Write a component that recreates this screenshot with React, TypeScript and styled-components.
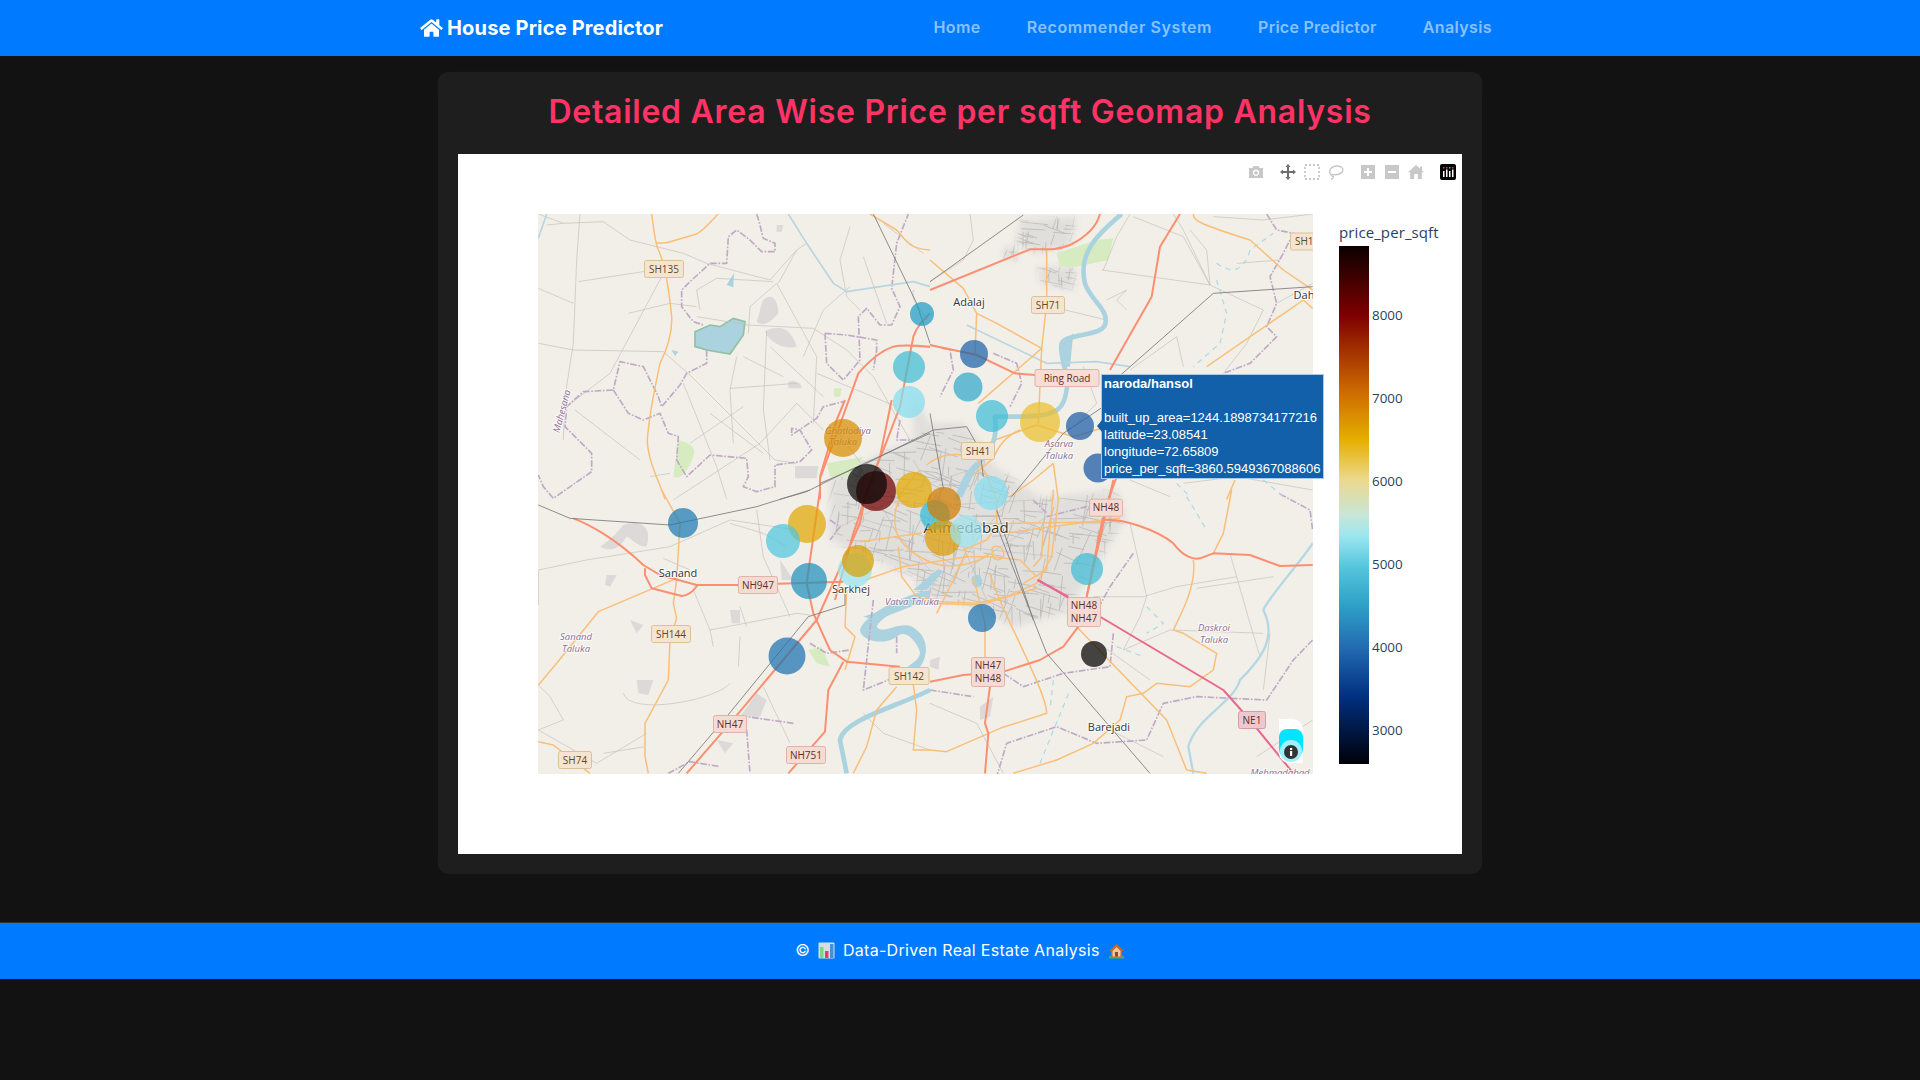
import React from "react";
import styled, { createGlobalStyle } from "styled-components";
import { FaHome } from "react-icons/fa";

const Global = createGlobalStyle`
  html, body { margin: 0; padding: 0; background: #121212; }
  body { min-height: 1080px; font-family: "Inter", "Liberation Sans", sans-serif; }
`;

const Page = styled.div`
  width: 1920px;
  min-height: 1080px;
  overflow: hidden;
  background: #121212;
  color: #fff;
`;
const Nav = styled.nav`
  height: 56px;
  background: #007bff;
  display: flex;
  justify-content: center;
`;
const NavInner = styled.div`
  width: 1080px;
  padding-right: 8px;
  box-sizing: border-box;
  display: flex;
  align-items: center;
  justify-content: space-between;
`;
const Brand = styled.div`
  display: flex;
  align-items: center;
  gap: 4px;
  font-size: 20px;
  font-weight: 700;
  letter-spacing: 0.17px;
  color: #fff;
  svg { width: 23px; height: 20px; }
`;
const NavLinks = styled.div`
  display: flex;
  gap: 46px;
  padding-bottom: 2px;
`;
const NavLink = styled.a<{ $track: number }>`
  font-size: 16px;
  font-weight: 600;
  color: rgba(255, 255, 255, 0.55);
  letter-spacing: ${(p) => p.$track}px;
`;
const Card = styled.main`
  box-sizing: border-box;
  width: 1044px;
  height: 802px;
  margin: 16px auto 48px;
  padding: 0 20px 20px;
  background: #1e1e1e;
  border-radius: 10px;
  box-shadow: 0 0 12px rgba(255, 255, 255, 0.02);
`;
const Title = styled.h1`
  margin: 0;
  height: 82px;
  display: flex;
  align-items: center;
  justify-content: center;
  padding-bottom: 4px;
  box-sizing: border-box;
  font-size: 32px;
  font-weight: 600;
  letter-spacing: 0.73px;
  color: #ff3366;
`;
const Plot = styled.section`
  position: relative;
  box-sizing: border-box;
  height: 700px;
  padding: 60px 0 80px 80px;
  background: #fff;
  display: flex;
  align-items: flex-start;
`;
const ModeBar = styled.div`
  position: absolute;
  top: 10px;
  right: 6px;
  display: flex;
  gap: 16px;
`;
const ModeGroup = styled.div`
  display: flex;
  gap: 8px;
`;
const ModeIcon = styled.svg`
  width: 16px;
  height: 16px;
  display: block;
`;
const MapBox = styled.div`
  position: relative;
  width: 775px;
  height: 560px;
  flex: none;
`;
const MapSvg = styled.svg`
  display: block;
  width: 775px;
  height: 560px;
  background: #f2efe9;
`;
const Tooltip = styled.div`
  position: absolute;
  left: 563px;
  top: 160px;
  box-sizing: border-box;
  width: 223px;
  height: 105px;
  padding: 0 0 0 2px;
  background: #1160a9;
  border: 1px solid #a9c9e6;
  font: 13px/17px "Liberation Sans", Arial, sans-serif;
  color: #fff;
  white-space: nowrap;
  &::before {
    content: "";
    position: absolute;
    left: -5px;
    top: 45px;
    border-style: solid;
    border-width: 6px 5px 6px 0;
    border-color: transparent #1160a9 transparent transparent;
  }
`;
const TipTitle = styled.div`
  font-weight: 700;
  margin-bottom: 17px;
`;
const InfoBadge = styled.div`
  position: absolute;
  right: 10px;
  bottom: 11px;
  box-sizing: border-box;
  width: 24px;
  height: 44px;
  padding-top: 10px;
  background: #fff;
  border-radius: 0 10px 0 10px;
`;
const InfoGlow = styled.div`
  position: relative;
  height: 30px;
  background: #00e5ff;
  border-radius: 8px 8px 10px 10px;
  &::after {
    content: "";
    position: absolute;
    left: 1px;
    top: 11px;
    width: 22px;
    height: 22px;
    border-radius: 50%;
    background: #9ff0fb;
  }
`;
const InfoDot = styled.svg`
  position: absolute;
  z-index: 1;
  left: 5px;
  top: 26px;
  width: 14px;
  height: 14px;
`;
const Legend = styled.div`
  margin-left: 26px;
  color: #2a3f5f;
  font-family: "Open Sans", sans-serif;
`;
const LegendTitle = styled.div`
  box-sizing: border-box;
  height: 32px;
  padding-top: 8px;
  font-size: 15px;
  line-height: 20px;
  letter-spacing: 0.1px;
  white-space: nowrap;
`;
const LegendBody = styled.div`
  display: flex;
  gap: 3px;
`;
const ColorBar = styled.div`
  width: 30px;
  height: 518px;
  background: linear-gradient(
    #0b0000 0%, #7f0000 13.5%, #cc6a00 28%, #e6b000 37.5%, #ecd88c 45%,
    #c8e6d8 52%, #9ce6f0 56%, #55c5de 62%, #2fa3c8 69%, #2268b0 78%,
    #003080 87%, #000008 100%
  );
`;
const Ticks = styled.div`
  padding-top: 28px;
`;
const Tick = styled.div`
  height: 82.9px;
  display: flex;
  align-items: center;
  font-size: 13.4px;
`;
const Footer = styled.footer`
  box-sizing: border-box;
  height: 57px;
  padding-bottom: 2px;
  border-top: 1px solid #333;
  background: #007bff;
  display: flex;
  align-items: center;
  justify-content: center;
  gap: 8px;
  font-size: 16px;
  color: #fff;
`;
const FooterText = styled.span`
  letter-spacing: 0.3px;
`;
const Emoji = styled.svg`
  width: 17px;
  height: 17px;
  flex: none;
`;

type Kind = "minor" | "boundary" | "canal" | "stream" | "primary" | "trunk" | "pink" | "rail" | "river" | "brook";
const strokeMap: Record<Kind, [string, number, string]> = {
  minor: ["#c2bfbb", 2, "none"],
  boundary: ["#bfaac6", 5, "20 5 5 5"],
  canal: ["#b9d6e0", 5, "none"],
  stream: ["#a9d8e8", 3.5, "16 14"],
  primary: ["#f9bf78", 4.5, "none"],
  trunk: ["#fb8f70", 6, "none"],
  pink: ["#e8688e", 6, "none"],
  rail: ["#7c7c7c", 2.6, "none"],
  river: ["#aad3df", 14, "none"],
  brook: ["#b4d8e3", 7, "none"],
};
const Line = styled.path<{ $kind: Kind }>`
  fill: none;
  stroke: ${(p) => strokeMap[p.$kind][0]};
  stroke-width: ${(p) => strokeMap[p.$kind][1]};
  stroke-dasharray: ${(p) => strokeMap[p.$kind][2]};
  stroke-linejoin: round;
`;

type Sheet = { at: [number, number]; urban?: string[]; grey?: string[]; park?: string[]; water?: string[] } & Partial<Record<Kind, string[]>>;

const sheets: Sheet[] = [
  {
    at: [530, 210],
    grey: [
      "M700,270 C725,245 745,270 745,310 C720,340 700,350 680,335 C690,310 690,290 700,270 Z",
      "M705,365 C740,345 780,345 800,410 C770,420 720,400 705,365 Z",
      "M795,768 L865,768 L860,805 L795,805 Z",
      "M775,515 C790,510 815,515 815,535 L775,535 Z",
      "M740,45 L760,45 L755,65 L740,65 Z",
    ],
    park: ["M912,535 L935,535 L930,560 L912,560 Z", "M445,690 C480,700 500,710 490,740 C470,790 450,810 430,800 Z", "M890,760 L1000,740 L960,800 L900,800 Z"],
    water: ["M590,225 L612,190 L610,232 Z", "M425,420 L445,425 L435,438 Z"],
    minor: [
      "M150,12 L140,150 L130,400 L105,560 L100,690",
      "M25,235 L130,280",
      "M25,400 L130,420 L400,425 L480,495 L735,750 L800,760",
      "M145,215 L340,185 L420,180",
      "M295,310 L420,280 L500,290",
      "M500,320 L655,345 L850,355 L950,420 L1030,500 L1140,690",
      "M135,600 L330,750",
      "M110,590 L240,490 L395,200",
      "M740,220 L660,290 L655,370",
      "M740,220 L860,440 L850,640",
      "M710,360 L700,600 L720,750",
      "M720,410 L880,560",
      "M860,490 L1100,590",
      "M800,580 L690,700 L430,870",
      "M460,520 L560,770 L590,868",
      "M50,45 L100,40 L220,35 L300,90 L460,130 L530,160 L720,210 L800,120 L830,100",
      "M500,240 L510,300 M500,240 L560,205 L730,215",
      "M620,440 L600,540 L610,700 M600,535 L800,520",
      "M800,580 L880,660 M920,660 L1000,770 M800,120 L745,220",
      "M960,50 L930,150 L950,260 L990,300 M1000,140 L1070,340",
      "M25,12 L100,40",
      "M820,440 L880,300 L960,230 M640,440 L760,500 M480,700 L640,590 M540,610 L700,730",
      "M420,790 L360,800 M1060,40 L1180,130 M1150,240 C1140,280 1180,300 1190,330",
    ],
    boundary: [
      "M680,12 C690,40 695,70 700,85 L735,100 L735,125 L695,125 L660,90 L620,60 L595,80 L590,160 L540,160 L480,215 L455,240 L455,290 L490,335 L520,345",
      "M530,420 L530,460 L470,490 L450,525 L395,590 L385,560 L340,470 L270,455 L250,540 L160,545 L110,590 L105,650 L185,730 L185,785 L70,865 L40,830 L25,795",
      "M250,540 L295,610 L340,630 L390,610 L415,670 L445,680 L440,750 L470,800 L540,735 L650,745 L655,800 L640,830 L680,845 L735,830 L735,765 L810,755 L845,720 L810,660 L785,655 L785,675 L860,625 L880,590 L940,575",
      "M885,370 L890,460 L940,510 L990,450 L985,320 L1010,295 L1050,345 L1085,345 L1110,290 L1085,235 L1100,100 L1135,12",
      "M885,370 L950,375 L1040,390 L1040,420 L1030,480",
    ],
    canal: ["M775,12 L830,100 L910,220 L950,245 L1150,215 L1200,230", "M50,12 L25,85"],
    primary: [
      "M365,12 C372,60 375,100 385,120 C410,170 420,270 425,320 C428,380 405,430 390,460 C375,530 355,640 352,690 C352,750 390,820 405,868",
      "M378,100 L410,98 L500,72 C530,55 550,25 565,12",
      "M1020,12 L1100,60 C1130,90 1130,115 1200,120",
      "M1140,408 L1200,412",
    ],
    trunk: [
      "M870,868 L870,805 L935,630 L985,490 C1020,450 1060,420 1090,410 C1110,405 1140,405 1200,410",
      "M1000,868 L1060,720 L1110,590 L1150,380 C1160,350 1180,330 1200,310",
    ],
    rail: ["M1030,12 L1160,280 L1200,400", "M750,868 L830,845 L960,780 L1200,670"],
  },
  {
    at: [930, 210],
    urban: ["M270,30 L440,20 L420,110 L320,130 L260,100 Z", "M215,120 L260,105 L260,150 L225,150 Z", "M325,170 L440,170 L430,240 L330,220 Z", "M-50,560 L0,640 L100,640 L170,720 L120,860 L-50,860 Z"],
    park: ["M380,130 L500,90 L550,85 L535,150 L440,170 L390,170 Z"],
    water: ["M395,400 L430,370 L420,470 L395,470 Z"],
    minor: [
      "M515,180 L840,225 L760,60 L730,12",
      "M405,300 L530,330",
      "M0,215 L100,150 L130,90 L120,12",
      "M520,180 L560,80 L600,12",
      "M610,20 L760,80 L840,225 L1000,300",
      "M590,240 L560,270 L590,300 M530,270 L590,240",
      "M840,225 L830,120 L780,60",
      "M600,480 L740,380 L760,470",
      "M1000,300 L950,400 L880,490",
      "M1040,280 L1148,220 M920,160 L1050,150",
      "M600,810 L720,860 M760,820 L920,800 L1148,840",
      "M850,20 L1000,30 L1148,12",
      "M460,470 L500,580 L440,640",
    ],
    boundary: [
      "M1010,12 L1040,60 L1090,70 L1060,130 L1020,200 L1040,280 L1010,350 L1040,380 L960,460 L880,490",
      "M0,405 L60,420 L70,480 L30,560",
      "M190,430 L260,460 L275,520 L240,590",
    ],
    stream: ["M860,160 C900,190 940,190 960,120 L1030,70", "M860,210 L890,310 L870,400 L790,470", "M740,820 L780,860 M1000,810 L1060,860"],
    canal: ["M110,345 L350,460 L500,455 L600,470"],
    river: [
      "M575,12 C520,60 440,120 465,220 C480,270 540,300 525,345 C510,380 410,370 395,400 C385,440 420,490 410,540 C400,590 395,620 270,620 L195,620 C200,680 200,700 130,780 L90,860",
    ],
    primary: [
      "M790,12 C790,30 800,40 960,90 L1060,180 L1148,240",
      "M0,150 L100,235 L140,310 L135,430",
      "M140,310 L200,340 L335,415",
      "M350,120 L350,280 L335,415 L325,640",
      "M335,415 L145,580",
      "M1120,270 L830,470",
      "M1120,270 L1148,295",
      "M195,690 L320,645 L430,680 L530,650",
      "M915,810 L890,868",
    ],
    trunk: [
      "M0,240 L300,118 C340,115 370,125 420,105 C470,80 500,50 510,12",
      "M750,12 L690,110 L665,260 L540,480",
      "M0,405 L140,435 L255,490 L315,495",
      "M560,800 L535,868",
    ],
    rail: ["M0,215 L280,15", "M555,510 L850,250 L1148,230", "M245,860 L400,670 L520,590"],
  },
  {
    at: [530, 490],
    grey: [
      "M280,105 C320,90 370,100 350,170 C320,170 300,140 290,140 C270,170 250,190 210,170 C240,150 260,130 280,105 Z",
      "M230,255 L260,255 L240,290 L225,285 Z",
      "M320,570 L370,570 L355,615 L325,610 Z",
      "M600,360 L630,360 L630,400 L605,400 Z",
      "M300,390 L340,405 L320,430 Z",
      "M680,610 L710,630 L690,680 L630,680 Z",
      "M560,750 L610,760 L585,790 Z",
      "M750,210 L790,270 L755,270 Z",
    ],
    park: ["M835,480 L875,470 L900,530 L860,520 Z"],
    water: [
      "M1200,300 C1100,320 1000,380 990,420 C990,450 1060,470 1100,440 C1130,410 1170,470 1170,490 C1165,520 1130,520 1110,560 L1140,560 C1200,520 1200,450 1160,420 C1120,380 1060,440 1040,410 C1060,370 1150,340 1200,325 Z",
    ],
    river: ["M1200,600 C1100,650 940,690 930,750 L950,850"],
    minor: [
      "M25,240 L170,210 L420,170 L600,90 L800,120",
      "M490,300 L540,420 L550,470",
      "M630,440 L625,530",
      "M540,420 L800,370 L840,375",
      "M280,610 C300,680 560,630 600,580",
      "M25,720 L100,690 L60,620 L25,585",
      "M25,720 L200,820 L350,730",
      "M220,790 L345,770",
      "M680,60 L700,200 L780,380",
      "M600,100 L700,130 L770,170",
      "M630,350 L650,410 M400,205 L480,240",
      "M25,240 L25,345",
      "M700,590 L780,760",
      "M1000,670 L1060,730 L1200,780",
    ],
    boundary: ["M790,700 L720,690 L650,680", "M650,720 L660,850 M415,850 L480,815 L570,830", "M1030,330 L1000,600 L1100,560", "M840,460 L890,490 L960,480", "M1100,440 L1100,490"],
    primary: [
      "M395,0 L450,100 L440,270 L430,340 L440,385 L420,450 L415,570 L345,700 L345,800 L355,850",
      "M440,265 L205,365 L80,520 L25,585",
      "M950,300 L945,410 L975,440 L945,540",
      "M1150,585 L1160,660 L1150,780 L1200,780",
      "M1100,590 L1040,660 L1010,770 L970,850",
      "M25,755 L70,765 L180,850",
    ],
    trunk: [
      "M130,85 C170,100 250,140 340,225 L390,255 L500,285 L630,285 L940,275",
      "M345,235 L345,255 L365,295 L455,318 C490,315 500,285 505,283",
      "M470,850 L600,700 L860,390 L990,100 L1000,50",
      "M870,0 L830,280 L850,370 L900,480 L950,515 L1110,530",
      "M940,515 L895,600 L885,725 L775,850",
    ],
    rail: ["M25,45 L120,85 L420,105 L680,50 L840,0", "M445,850 L590,680 L835,380 L945,345 L945,310"],
  },
  {
    at: [930, 490],
    urban: ["M-40,60 L560,0 L590,80 L480,260 L400,370 L250,410 L130,350 L-40,320 Z"],
    grey: ["M0,510 L30,500 L25,540 L0,530 Z", "M150,650 L190,620 L180,680 L150,690 Z"],
    brook: ["M1148,160 C1100,230 1010,330 1000,360 C1040,440 1000,500 930,570 C910,640 800,680 775,770 L790,850"],
    water: ["M125,265 C140,240 160,260 155,280 C140,300 125,285 125,265 Z"],
    minor: [
      "M490,320 L640,320 L740,290 L920,260",
      "M600,100 L650,320 L630,380 L580,480",
      "M900,190 L960,400 L990,500",
      "M580,480 L720,420 L1000,430",
      "M1148,690 L980,800",
      "M800,295 L1030,260",
      "M0,640 L140,700 L220,850",
      "M540,720 L700,800",
      "M520,470 L660,570",
      "M1020,430 L1000,600",
    ],
    boundary: [
      "M610,190 L540,290 L480,400",
      "M550,430 L540,530 L400,550 L280,590 L190,530",
      "M1148,450 L1090,510 L1010,630 L800,620 L700,640 L650,750 L500,760 L380,710 L230,760 L200,860",
      "M0,600 L130,620",
      "M1050,12 L1140,60 L1148,120",
    ],
    stream: ["M770,20 L830,120 M650,350 L700,400 L650,430 M560,470 L640,500 M370,570 L360,660 M330,820 L420,600"],
    primary: [
      "M370,0 L350,240 L280,280",
      "M0,340 L150,345 L320,295",
      "M180,250 C200,340 350,600 350,670 L210,715 L50,785 L0,780",
      "M905,0 L880,130 L850,190",
      "M790,210 C800,280 760,360 730,420 L760,430 L860,490 L850,540 L780,590 L680,580 L640,610 L590,620 L570,690 L490,760 L380,810 L250,850",
      "M440,410 L710,690 L770,840 L830,850",
      "M0,105 L520,95",
      "M130,260 L165,400 L165,510",
    ],
    trunk: [
      "M545,0 L515,100 L470,320 L445,410 L400,470 L330,510 L220,545 L100,555 L0,575",
      "M180,590 L165,700 L175,730 L165,850",
      "M520,90 C580,85 680,120 730,160 C760,200 790,210 810,205 L850,190 L960,195 L1050,228 L1148,225",
    ],
    pink: ["M325,270 L880,600 L960,690 L1090,850"],
    rail: ["M205,120 L350,490 L660,850"],
  },
  {
    at: [820, 400],
    urban: ["M30,240 L200,150 L420,70 L500,180 L700,320 L700,500 L620,600 L500,600 L300,540 L170,480 L30,420 Z"],
    water: [
      "M455,545 a16,16 0 1 0 32,0 a16,16 0 1 0 -32,0",
      "M280,570 L350,510 L370,515 L320,570 Z",
      "M130,650 L300,590 L300,610 L170,660 Z",
    ],
    minor: [
      "M40,280 L300,320 L640,300 M100,350 L420,440 L700,470",
      "M120,200 L230,400 L330,510 M280,180 L420,420 L500,600",
      "M600,260 L470,420 L380,560 M680,350 L420,520",
      "M60,380 L300,260 L480,200",
    ],
    boundary: ["M680,350 L800,320 L870,340", "M240,60 L230,120 L280,120", "M640,300 L680,340", "M30,360 L60,380 L30,420"],
    river: ["M472,190 C430,230 420,270 410,300"],
    primary: [
      "M300,210 C260,250 220,300 225,370 C225,430 290,470 340,490 C400,510 470,490 510,460",
      "M320,195 C350,170 380,160 430,165",
      "M470,175 L500,225 L530,300 L530,380 L500,420 L430,450",
      "M120,425 L300,400 L430,390 L560,400 L660,385 L810,365 L900,355",
      "M135,540 L250,500 L440,470 L520,470 L600,480 L650,530",
      "M600,90 C550,110 530,150 520,175 L460,225",
      "M700,190 L640,240 L570,290",
      "M700,190 L715,300 L695,470 L650,550 L560,590 L470,610 L360,605 L290,590 L245,530 L235,440",
      "M670,380 L665,470 L640,500",
      "M440,450 L400,540 L350,640",
      "M520,460 C500,430 560,430 550,470 C530,490 510,470 520,460",
    ],
    trunk: ["M880,240 L800,590", "M75,0 L50,60 L0,230", "M215,0 L180,170 L100,400 L45,600"],
    pink: ["M652,540 L745,590"],
    rail: ["M330,40 L370,265", "M530,330 L640,660", "M0,250 L140,190 L340,90 L440,80 L480,150 L490,230"],
  },
];

const lineOrder: Kind[] = ["minor", "boundary", "canal", "stream", "brook", "river", "primary", "trunk", "pink", "rail"];

const makeStreets = () => {
  let seed = 41;
  const rnd = () => {
    seed = (seed * 16807) % 2147483647;
    return seed / 2147483647;
  };
  const out: string[] = [];
  const region = (count: number, x0: number, y0: number, w: number, h: number, maxLen: number) => {
    for (let i = 0; i < count; i++) {
      const x = x0 + rnd() * w;
      const y = y0 + rnd() * h;
      const angle = (rnd() < 0.5 ? 0.2 : 1.75) + (rnd() - 0.5) * 0.5;
      const len = 6 + rnd() * maxLen;
      out.push(`M${x.toFixed(1)},${y.toFixed(1)} l${(Math.cos(angle) * len).toFixed(1)},${(Math.sin(angle) * len).toFixed(1)}`);
    }
  };
  region(420, 835, 430, 280, 190, 30);
  region(110, 1000, 214, 85, 75, 22);
  return out.join(" ");
};
const streets = makeStreets();

const Area = styled.path`
  stroke: none;
`;
const ShieldBox = styled.rect<{ $tone: string }>`
  fill: ${(p) => ({ sh: "#f5e4cf", nh: "#f7dbd2", ne: "#ecc9d1", ring: "#f8dcd6" } as Record<string, string>)[p.$tone]};
  stroke: ${(p) => ({ sh: "#dcc198", nh: "#dfb3a7", ne: "#d49aa9", ring: "#dfb3a7" } as Record<string, string>)[p.$tone]};
  stroke-width: 1;
`;
const ShieldText = styled.text<{ $tone: string }>`
  font: 10px "Open Sans", sans-serif;
  fill: ${(p) => (p.$tone === "sh" ? "#5c4a2a" : "#5c2f2a")};
  text-anchor: middle;
`;
const PlaceText = styled.text<{ $size?: number }>`
  font: ${(p) => p.$size ?? 11}px "Open Sans", sans-serif;
  fill: #333;
  text-anchor: middle;
  paint-order: stroke;
  stroke: rgba(255, 255, 255, 0.8);
  stroke-width: 2px;
`;
const RegionText = styled.text`
  font: italic 9.5px "Open Sans", sans-serif;
  fill: #8d6d96;
  text-anchor: middle;
  paint-order: stroke;
  stroke: rgba(255, 255, 255, 0.7);
  stroke-width: 2px;
`;
const Marker = styled.circle`
  opacity: 0.72;
`;

const shields: [string[], number, number, number, string][] = [
  [["SH135"], 664, 269, 39, "sh"],
  [["SH137"], 1310, 241.5, 39, "sh"],
  [["SH71"], 1048, 305, 33, "sh"],
  [["Ring Road"], 1067, 378, 64, "ring"],
  [["SH41"], 978, 451, 33, "sh"],
  [["NH48"], 1106, 507.7, 33, "nh"],
  [["NH48", "NH47"], 1084, 612, 33, "nh"],
  [["NH47", "NH48"], 988, 672, 33, "nh"],
  [["NE1"], 1252, 720, 27, "ne"],
  [["NH947"], 758, 585, 39, "nh"],
  [["SH144"], 671, 634, 39, "sh"],
  [["SH142"], 909, 676, 40, "sh"],
  [["NH47"], 730, 724, 33, "nh"],
  [["NH751"], 806, 755, 39, "nh"],
  [["SH74"], 575, 760, 33, "sh"],
];
const places: [string, number, number, number?][] = [
  ["Adalaj", 969, 306],
  ["Dah", 1304, 299],
  ["Sanand", 678, 577],
  ["Sarkhej", 851, 593],
  ["Ahmedabad", 966, 533, 15],
  ["Barejadi", 1109, 731],
];
const regions: [string, number, number][] = [
  ["Ghatlodiya", 848, 434],
  ["Taluka", 843, 445],
  ["Asarva", 1059, 447],
  ["Taluka", 1059, 459],
  ["Vatva Taluka", 912, 605],
  ["Sanand", 576, 640],
  ["Taluka", 576, 652],
  ["Daskroi", 1214, 631],
  ["Taluka", 1214, 643],
  ["Mehmadabad", 1280, 776],
];
const markers: [number, number, number, string][] = [
  [922, 314, 12, "#1c9bc4"],
  [909, 367, 16, "#3fbcd6"],
  [909, 402, 16, "#84def0"],
  [843, 438, 19, "#d88c00"],
  [914, 490, 18, "#e3aa04"],
  [992, 416, 16, "#3fbcd6"],
  [1040, 422, 20, "#eabe2e"],
  [1080, 426, 14, "#1a5ca6"],
  [1098, 468, 14.5, "#1554a4"],
  [974, 354, 14, "#1a62a8"],
  [968, 387, 14.5, "#30a8cc"],
  [1087, 569, 16, "#40bcd6"],
  [982, 618, 14, "#1a72b0"],
  [855, 570, 17, "#9be3ee"],
  [858, 561, 16, "#d8a004"],
  [807, 524, 19, "#e0a604"],
  [783, 541, 17, "#4ec6de"],
  [683, 523, 15, "#1a7ab4"],
  [809, 581, 18, "#1f8fbe"],
  [787, 656, 18.5, "#1a72b0"],
  [1094, 654, 13, "#000"],
  [935, 515, 15, "#30bcd8"],
  [943, 538, 18, "#dc9c04"],
  [944, 504, 17, "#d27b00"],
  [966, 531, 16, "#9be3ee"],
  [991, 493, 17, "#84def0"],
  [876, 491, 20, "#700000"],
  [867, 484, 20, "#050505"],
];

const Sheets = ({ draw }: { draw: (s: Sheet) => React.ReactNode }) => (
  <>
    {sheets.map((s, i) => (
      <g key={i} transform={`translate(${s.at[0]} ${s.at[1]}) scale(0.33333)`}>
        {draw(s)}
      </g>
    ))}
  </>
);

const MapDrawing = () => (
  <MapSvg viewBox="538 214 775 560">
    <defs>
      <filter id="soft" x="-10%" y="-10%" width="120%" height="120%">
        <feGaussianBlur stdDeviation="3" />
      </filter>
      <mask id="city" maskUnits="userSpaceOnUse" x="538" y="214" width="775" height="560">
        <g filter="url(#soft)">
          <Sheets draw={(s) => (s.urban ?? []).map((d, i) => <Area key={i} d={d} fill="#fff" />)} />
        </g>
      </mask>
    </defs>
    <g mask="url(#city)">
      <rect x="538" y="214" width="775" height="560" fill="#e0dfdc" />
      <path d={streets} stroke="#b9b7b5" strokeWidth="0.8" fill="none" />
    </g>
    <Sheets draw={(s) => (s.grey ?? []).map((d, i) => <Area key={i} d={d} fill="#dbdad8" />)} />
    <Sheets draw={(s) => (s.park ?? []).map((d, i) => <Area key={i} d={d} fill="#d6ecc0" />)} />
    <Sheets draw={(s) => (s.water ?? []).map((d, i) => <Area key={i} d={d} fill="#aad3df" />)} />
    <g transform="translate(530 210) scale(0.33333)">
      <path d="M495,365 L540,345 L570,350 L610,325 L645,335 L640,375 L600,432 L530,420 L495,410 Z" fill="#aad3df" stroke="#92c0a0" strokeWidth="5" />
    </g>
    {lineOrder.map((k) => (
      <Sheets key={k} draw={(s) => (s[k] ?? []).map((d, i) => <Line key={i} d={d} $kind={k} />)} />
    ))}
    {places.map(([t, x, y, size]) => (
      <PlaceText key={t} x={x} y={y} $size={size}>{t}</PlaceText>
    ))}
    {regions.map(([t, x, y], i) => (
      <RegionText key={i} x={x} y={y}>{t}</RegionText>
    ))}
    <RegionText x={0} y={0} transform="translate(565 412) rotate(-75)">Mahesana</RegionText>
    {shields.map(([lines, x, y, w, tone], i) => {
      const h = lines.length > 1 ? 29 : 17;
      return (
        <g key={i}>
          <ShieldBox x={x - w / 2} y={y - h / 2} width={w} height={h} rx={2} $tone={tone} />
          {lines.map((t, j) => (
            <ShieldText key={j} x={x} y={y + 3.6 - (lines.length - 1) * 6.5 + j * 13} $tone={tone}>{t}</ShieldText>
          ))}
        </g>
      );
    })}
    {markers.map(([x, y, r, c], i) => (
      <Marker key={i} cx={x} cy={y} r={r} fill={c} />
    ))}
  </MapSvg>
);

const grey = "#c8c8c8";
const links: [string, number][] = [
  ["Home", 0.4],
  ["Recommender System", 0.6],
  ["Price Predictor", 0.26],
  ["Analysis", 0.4],
];
const App = () => (
  <Page>
    <Global />
    <Nav>
      <NavInner>
        <Brand><FaHome />House Price Predictor</Brand>
        <NavLinks>
          {links.map(([t, track]) => (
            <NavLink key={t} $track={track}>{t}</NavLink>
          ))}
        </NavLinks>
      </NavInner>
    </Nav>
    <Card>
      <Title>Detailed Area Wise Price per sqft Geomap Analysis</Title>
      <Plot>
        <ModeBar>
          <ModeGroup>
            <ModeIcon viewBox="0 0 16 16">
              <path fill={grey} fillRule="evenodd" d="M1,4 H4.5 L5.5,2 H10.5 L11.5,4 H15 V14 H1 Z M8,5.5 a3.2,3.2 0 1 0 0.01,0 Z M8,7 a1.8,1.8 0 1 1 -0.01,0 Z" />
            </ModeIcon>
          </ModeGroup>
          <ModeGroup>
            <ModeIcon viewBox="0 0 16 16">
              <path fill="#6e6e6e" d="M8,0 L10.5,3 H9 V7 H13 V5.5 L16,8 L13,10.5 V9 H9 V13 H10.5 L8,16 L5.5,13 H7 V9 H3 V10.5 L0,8 L3,5.5 V7 H7 V3 H5.5 Z" />
            </ModeIcon>
            <ModeIcon viewBox="0 0 16 16">
              <rect x="1" y="1" width="14" height="14" fill="none" stroke={grey} strokeWidth="1.8" strokeDasharray="2 2" />
            </ModeIcon>
            <ModeIcon viewBox="0 0 16 16">
              <path fill="none" stroke={grey} strokeWidth="1.4" d="M3,11 C0,7 3,2 9,2 C14,2 16,5 14,8 C12,10.5 8,11 5,10.5 C3,10 3,12 5,12.5 C6,13 5,15 3,15" />
            </ModeIcon>
          </ModeGroup>
          <ModeGroup>
            <ModeIcon viewBox="0 0 16 16">
              <path fill={grey} fillRule="evenodd" d="M1,1 H15 V15 H1 Z M7,4 V7 H4 V9 H7 V12 H9 V9 H12 V7 H9 V4 Z" />
            </ModeIcon>
            <ModeIcon viewBox="0 0 16 16">
              <path fill={grey} fillRule="evenodd" d="M1,1 H15 V15 H1 Z M4,7 V9 H12 V7 Z" />
            </ModeIcon>
            <ModeIcon viewBox="0 0 16 16">
              <path fill={grey} d="M8,1 L12,4.6 V2.5 H14 V6.4 L16,8.2 H13.8 V15 H9.8 V10 H6.2 V15 H2.2 V8.2 H0 Z" />
            </ModeIcon>
          </ModeGroup>
          <ModeGroup>
            <ModeIcon viewBox="0 0 16 16">
              <rect width="16" height="16" rx="2" fill="#000" />
              <path fill="#fff" d="M3,7 H4.5 V13 H3 Z M6,5.5 H7.5 V13 H6 Z M9,7 H10.5 V13 H9 Z M12,5.5 H13.5 V13 H12 Z" />
              <rect x="3" y="3" width="1.5" height="1.5" fill="#e6366f" />
              <rect x="6" y="3" width="1.5" height="1.5" fill="#e6366f" />
              <rect x="9" y="3" width="1.5" height="1.5" fill="#3ac4e0" />
              <rect x="12" y="3" width="1.5" height="1.5" fill="#e6366f" />
            </ModeIcon>
          </ModeGroup>
        </ModeBar>
        <MapBox>
          <MapDrawing />
          <Tooltip>
            <TipTitle>naroda/hansol</TipTitle>
            <div>built_up_area=1244.1898734177216</div>
            <div>latitude=23.08541</div>
            <div>longitude=72.65809</div>
            <div>price_per_sqft=3860.5949367088606</div>
          </Tooltip>
          <InfoBadge>
            <InfoGlow />
            <InfoDot viewBox="0 0 14 14">
              <circle cx="7" cy="7" r="7" fill="#333" />
              <rect x="6" y="6" width="2.2" height="5" fill="#fff" />
              <rect x="6" y="3" width="2.2" height="2" fill="#fff" />
            </InfoDot>
          </InfoBadge>
        </MapBox>
        <Legend>
          <LegendTitle>price_per_sqft</LegendTitle>
          <LegendBody>
            <ColorBar />
            <Ticks>
              {[8000, 7000, 6000, 5000, 4000, 3000].map((t) => (
                <Tick key={t}>{t}</Tick>
              ))}
            </Ticks>
          </LegendBody>
        </Legend>
      </Plot>
    </Card>
    <Footer>
      <span>©</span>
      <Emoji viewBox="0 0 17 17">
        <rect x="0.5" y="0.5" width="16" height="16" rx="1" fill="#d8dde2" />
        <rect x="2" y="5" width="3.5" height="11" fill="#7ed67e" />
        <rect x="7" y="9" width="3.5" height="7" fill="#e8387a" />
        <rect x="12" y="2" width="3.5" height="14" fill="#4a8fd0" />
      </Emoji>
      <FooterText>Data-Driven Real Estate Analysis</FooterText>
      <Emoji viewBox="0 0 17 17">
        <rect x="1" y="14" width="15" height="2.5" fill="#4caf50" />
        <path fill="#c1692f" d="M8.5,2 L16,9 H14 V15 H3 V9 H1 Z" />
        <path fill="#e9c9a0" d="M4.5,9 L8.5,5 L12.5,9 V14.5 H4.5 Z" />
        <rect x="7" y="10" width="3" height="4.5" fill="#8a4b22" />
      </Emoji>
    </Footer>
  </Page>
);

export default App;
